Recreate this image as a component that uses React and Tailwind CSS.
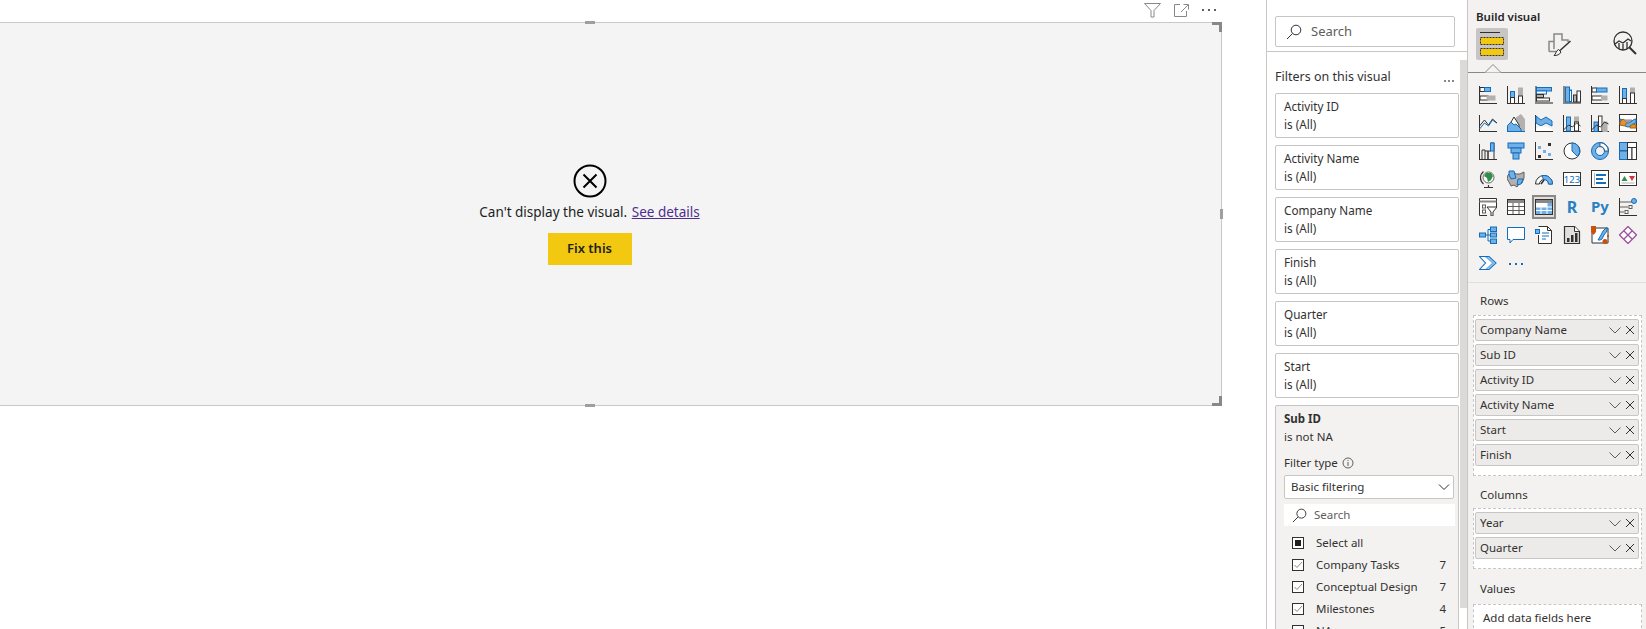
import React from "react";

const D = "#323130";
const B = "#106ebe";
const L = "#71afe5";
const G = "#b3b0ad";
const W = "#ffffff";

const I = ({ children, size = 18, box = 18 }) => (
  <svg width={size} height={size} viewBox={`0 0 ${box} ${box}`} fill="none" strokeWidth="1">
    {children}
  </svg>
);
const R = ({ x, y, w, h, f = W, s = D, sw = 1 }) => (
  <rect x={x} y={y} width={w} height={h} fill={f} stroke={s} strokeWidth={sw} />
);
const P = ({ d, f = "none", s = D, sw = 1 }) => <path d={d} fill={f} stroke={s} strokeWidth={sw} />;

const icons = [
  <>
    <P d="M.5 0v17.5M0 17.5h18" />
    <R x="1" y="1.5" w="4.5" h="4" />
    <R x="5.5" y="1.5" w="6" h="4" f={L} s={B} />
    <R x="1" y="10" w="8" h="4" />
    <R x="8" y="10" w="8" h="4" f={G} s={G} />
  </>,
  <>
    <P d="M.5 0v17.5M0 17.5h18" />
    <R x="3.5" y="5.5" w="4" h="6" f={L} s={B} />
    <R x="3.5" y="11.5" w="4" h="6" />
    <R x="11.5" y="2" w="4" h="8" f={G} s={G} />
    <R x="11.5" y="10" w="4" h="7.5" />
  </>,
  <>
    <P d="M1 0v18M0 17h18" s="#8a8886" sw="2" />
    <R x="1.5" y="1.5" w="15" h="3.5" f={L} s={B} />
    <R x="1.5" y="5" w="10" h="3" f={W} s={B} />
    <R x="1.5" y="8.5" w="7" h="3" f={G} s={D} />
    <R x="1.5" y="12" w="13" h="3" f={W} s={D} />
  </>,
  <>
    <P d="M1 0v18M0 17h18" s="#8a8886" sw="2" />
    <R x="2.5" y="1" w="4" h="15" f={L} s={B} />
    <R x="6.5" y="4" w="2" h="12" f={W} s={B} />
    <R x="10.5" y="9" w="3" h="7" f={G} s={D} />
    <R x="14" y="5" w="3.5" h="11" f={W} s={D} />
  </>,
  <>
    <P d="M.5 0v17.5M0 17.5h18" />
    <R x="1" y="2" w="4.5" h="4" />
    <R x="5.5" y="2" w="10.5" h="4" f={L} s={B} />
    <R x="1" y="10" w="9.5" h="4" />
    <R x="10.5" y="10" w="5.5" h="4" f={G} s={G} />
  </>,
  <>
    <P d="M.5 0v17.5M0 17.5h18" />
    <R x="3.5" y="2.5" w="4" h="10" f={L} s={B} />
    <R x="3.5" y="12.5" w="4" h="5" />
    <R x="11.5" y="2" w="4" h="5" f={G} s={G} />
    <R x="11.5" y="7" w="4" h="10.5" />
  </>,
  <>
    <P d="M.5 1v16.5M0 17.5h18" />
    <P d="M.5 12l5-6 4 5 4-6 4.5 4" />
    <P d="M.5 15l5-6 4 3 4-6 4 3" s={B} />
  </>,
  <>
    <P d="M9 4L14 0.5 18 6v12H9z" f={G} s={G} />
    <P d="M0 15L7 3l5 8v6.5H0z" f={W} s={D} />
    <P d="M.5 11.5L4 8l3 3 2-1 5 5v2.5H.5z" f={L} s={B} />
    <P d="M0 17.5h18" s={B} />
  </>,
  <>
    <P d="M.5 1v16.5M0 17.5h18" />
    <P d="M1 2l5 4 5-3 6 4v5l-6-3-5 3-5-3z" f={L} s={B} />
    <P d="M1 15l5-3 5 1 6 2v2H1z" f={W} s="none" />
  </>,
  <>
    <P d="M.5 1v16.5M0 17.5h18" />
    <R x="3.5" y="3" w="4" h="14" f={L} s={B} />
    <R x="11.5" y="3" w="4" h="5" f={G} s={G} />
    <R x="11.5" y="8" w="4" h="9" />
    <P d="M.5 16l5-5 4 2 4-4 4 3" />
  </>,
  <>
    <P d="M.5 1v16.5M0 17.5h18" />
    <R x="3" y="8" w="4" h="9.5" f={L} s={B} />
    <R x="7.5" y="2" w="3.5" h="15.5" />
    <R x="12" y="8" w="4" h="9.5" f={G} s={G} />
    <P d="M.5 16l5-5 4 2 4-5 4 2" />
  </>,
  <>
    <R x=".5" y=".5" w="17" h="17" f={W} s={D} />
    <P d="M1 5c4 0 4 4 8 4s4-4 8-4v4c-4 0-4 4-8 4s-4-4-8-4z" f={L} s={B} />
    <P d="M1 8l3-3 4 3-2 4-5-1z" f="#e8912a" s="#a4620f" />
    <P d="M11 12l3-2 3 1v3h-6z" f="#e8912a" s="#a4620f" />
    <P d="M5 6h8l-2 2H7z" f={G} s="#8a8886" />
  </>,
  <>
    <P d="M.5 2v15.5M0 17.5h18" />
    <P d="M3 17V8h3v9M6 9h3v8M9 17V9h3V1h3v16" s={D} />
    <R x="11.5" y="1" w="3.5" h="8" f={L} s={B} />
  </>,
  <>
    <R x="1" y="1" w="16" h="5" f={L} s={B} />
    <R x="4" y="6" w="10" h="5" f={L} s={B} />
    <R x="6" y="11" w="6" h="6" f={L} s={B} />
  </>,
  <>
    <P d="M.5 0v17.5M0 17.5h18" />
    <rect x="3" y="4" width="3" height="3" fill={L} />
    <rect x="8" y="8" width="3" height="3" fill={L} />
    <rect x="13" y="11" width="3" height="3" fill={L} />
    <rect x="3" y="13" width="3" height="3" fill={D} />
    <rect x="13" y="1" width="3" height="3" fill={D} />
  </>,
  <>
    <circle cx="9" cy="9" r="8" fill={W} stroke={D} />
    <P d="M9 1a8 8 0 0 1 5.5 13.5L9 9z" f={L} s={B} />
  </>,
  <>
    <circle cx="9" cy="9" r="6.5" stroke={L} strokeWidth="4" />
    <P d="M9 .5a8.5 8.5 0 0 1 8.5 8.5H13.500A4.500 4.500 0 0 0 9 4.500z" f={W} s={D} sw=".8" />
    <circle cx="9" cy="9" r="8.500" stroke={B} />
    <circle cx="9" cy="9" r="4.500" stroke={B} />
  </>,
  <>
    <R x=".5" y=".5" w="8" h="8" f={L} s={B} />
    <R x=".5" y="9" w="8" h="8.500" f={L} s={B} />
    <R x="8.500" y=".5" w="9" h="5" f={W} s={D} />
    <R x="8.500" y="5.500" w="4.500" h="12" f={W} s={D} />
    <R x="13" y="5.500" w="4.500" h="12" f={W} s={D} />
  </>,
  <>
    <circle cx="9.500" cy="7.500" r="5.500" fill={W} stroke="#605e5c" />
    <path d="M7 3h5l2 3-2 4-3 2-1-4-3-2z" fill="#2f8f46" />
    <P d="M4.500 1.500a8 8 0 0 0 0 12.500M5 17.500h9M9.500 15v2.500" s={D} sw="1.200" />
  </>,
  <>
    <P d="M1 5l4-4 4 3h4l4-2v6l-2 5-3 1-2 3-3-2-3 1-2-4-2-3z" f={G} s="#605e5c" />
    <P d="M2 1h5l1 4 1 3-5 1-2-4z" f={L} s={B} />
    <P d="M11 9h5l-2 5-4 1z" f={L} s={B} />
  </>,
  <>
    <P d="M.5 14a8.500 8.500 0 0 1 17 0h-4a4.500 4.500 0 0 0-9 0z" f={W} s={D} />
    <P d="M7 5.700a8.500 8.500 0 0 1 10.500 8.300h-4a4.500 4.500 0 0 0-5-4.500z" f={L} s={B} />
    <P d="M6 14l3-4" sw="1.500" />
  </>,
  <>
    <R x=".5" y="2.500" w="17" h="13" f={W} s={D} />
    <text x="9" y="13" textAnchor="middle" fontSize="9.500" fill={B} fontFamily="'Noto Sans',sans-serif">123</text>
  </>,
  <>
    <R x=".5" y=".5" w="17" h="17" f={W} s={D} />
    <P d="M3.500 3v12" s={G} />
    <rect x="5" y="4" width="10" height="2" fill={B} />
    <rect x="5" y="8" width="7" height="2" fill={B} />
    <rect x="5" y="12" width="10" height="2" fill={B} />
  </>,
  <>
    <R x=".5" y="2.500" w="17" h="13" f={W} s={D} />
    <path d="M2.500 11L5.500 6l3 5z" fill="#2f8f46" />
    <path d="M10 6h6l-3 5z" fill="#d13438" />
    <path d="M2.500 13h13" stroke={G} />
  </>,
  <>
    <P d="M.5 17.500V.5h17v9" f={W} />
    <P d="M.5 3.500h17" f="none" sw="2" s="#8a8886" />
    <R x="3.500" y="7" w="3" h="3" f={W} s="#605e5c" />
    <R x="3.500" y="12" w="3" h="3" f={W} s="#605e5c" />
    <P d="M.5 17.500H8" />
    <P d="M8 9h10l-4 5v4h-2v-4z" f={W} s={D} />
  </>,
  <>
    <R x=".5" y="1.500" w="17" h="15" f={W} s={D} />
    <rect x="1" y="2" width="16" height="3" fill="#8a8886" />
    <P d="M6 5v11M12 5v11M1 8.500h16M1 12.500h16" s="#605e5c" />
  </>,
  <>
    <rect x=".5" y="1.500" width="17" height="15" fill={W} stroke={D} />
    <rect x="1" y="2" width="16" height="3" fill="#8a8886" />
    <rect x="12" y="5" width="5" height="11" fill={L} />
    <rect x="1" y="9" width="16" height="7" fill={L} />
    <P d="M6 5v11M12 5v11M1 9h16M1 12.500h16" s={W} />
    <rect x=".5" y="1.500" width="17" height="15" stroke={D} />
  </>,
  <text x="9" y="15" textAnchor="middle" fontSize="16" fontWeight="700" fill="#2a80c4" fontFamily="'Noto Sans',sans-serif">R</text>,
  <svg width="24" height="18" viewBox="0 0 24 18" x="-3" y="0">
    <text x="12" y="14" textAnchor="middle" fontSize="15" fontWeight="700" fill="#2a80c4" fontFamily="'Noto Sans',sans-serif">Py</text>
  </svg>,
  <>
    <P d="M.5 0v17.500M0 17.500h18" />
    <P d="M1 4h12M1 9h8M1 14h4" s="#605e5c" />
    <circle cx="15" cy="3" r="2.500" fill={L} stroke={B} />
    <rect x="10" y="7.500" width="3" height="3" fill={W} stroke="#605e5c" />
    <rect x="6" y="12.500" width="3" height="3" fill={W} stroke="#605e5c" />
  </>,
  <>
    <R x=".5" y="7" w="6" h="4" f={L} s={B} />
    <P d="M7 9h4M9 3.500v11.500M9 3.500h3M9 15h3" s={B} />
    <R x="11.500" y="1" w="6" h="4.500" f={L} s={B} />
    <R x="11.500" y="7" w="6" h="4" f={L} s={B} />
    <R x="11.500" y="13" w="6" h="4.500" f={L} s={B} />
  </>,
  <P d="M.5 1.500h17v12H6l-3 3.500v-3.500H.5z" f={W} s={B} />,
  <>
    <P d="M3.500 .5h9l4 4v13h-13V9" f={W} />
    <P d="M12.500 .5v4h4" />
    <R x=".5" y="3.500" w="4" h="4" f={L} s={B} />
    <P d="M7 7h7M7 10h7M7 13h4" s={B} />
  </>,
  <>
    <P d="M1.500 .5h10l5 5v12h-15z" f="#e1dfdd" s={D} sw="1.200" />
    <P d="M11.500 .5v5h5" f={W} />
    <rect x="4" y="12" width="2.500" height="4" fill={D} />
    <rect x="8" y="9" width="2.500" height="7" fill={D} />
    <rect x="12" y="7" width="2.500" height="9" fill={D} />
  </>,
  <>
    <P d="M1 2h16v15H1z" f={W} s={D} />
    <P d="M7 14l3-5 2-4 3-3h1v3l-3 4-2 4-2 1z" f={L} s={B} />
    <path d="M0 0h5v6L2.500 9 0 6z" fill="#ca5010" />
    <circle cx="14" cy="15.500" r="2.500" fill="#ca5010" />
    <rect x="16" y="9" width="2" height="2" fill="#ca5010" />
  </>,
  <>
    <P d="M9 .5L17.500 9 9 17.500.5 9z" f={W} s="#9c4f9c" sw="1.300" />
    <P d="M5 5l8 8M13 5l-8 8" s="#9c4f9c" sw="1.300" />
  </>,
  <>
    <P d="M.5 2.500h9.500L17 9l-7 6.500H.5L6.500 9z" f={W} s={B} sw="1.100" />
    <path d="M6 3l7 6-6.500 6h2.500L15.500 9 9 3z" fill={L} />
  </>,
  <>
    <rect x="2" y="9" width="2" height="2" fill={B} />
    <rect x="8" y="9" width="2" height="2" fill={B} />
    <rect x="14" y="9" width="2" height="2" fill={B} />
  </>,
];

const Search = ({ size = 16 }) => (
  <svg width={size} height={size} viewBox="0 0 16 16" fill="none" stroke="#323130" strokeWidth="1">
    <circle cx="10" cy="6" r="4.800" />
    <path d="M6.500 9.500L1 15" />
  </svg>
);

const FilterCard = ({ name }) => (
  <div className="h-[45px] shrink-0 rounded-[2px] border border-[#c8c6c4] bg-white px-2 pt-[3px] text-[11.7px] leading-[18px] text-[#323130]">
    <div>{name}</div>
    <div>is (All)</div>
  </div>
);

const Check = ({ label, count, state }) => (
  <div className="flex h-[22px] shrink-0 items-center pl-2 pr-[4px] text-[11.5px] text-[#323130]">
    <span className="flex h-[12px] w-[12px] items-center justify-center border border-[#323130] bg-white">
      {state === "all" && <span className="h-[6px] w-[6px] bg-[#201f1e]" />}
      {state === "on" && (
        <svg width="10" height="10" viewBox="0 0 10 10" fill="none" stroke="#8a8886">
          <path d="M1.500 5l2.500 2.500 5-5.500" />
        </svg>
      )}
    </span>
    <span className="ml-3 flex-1">{label}</span>
    <span>{count}</span>
  </div>
);

const Field = ({ name }) => (
  <div className="flex h-[22px] items-center rounded-[2px] border border-[#c8c6c4] bg-[#edebe9] pl-1 pr-[2px] text-[11.5px] text-[#323130]">
    <span className="flex-1">{name}</span>
    <svg width="12" height="12" viewBox="0 0 12 12" fill="none" stroke="#605e5c" className="mr-1">
      <path d="M.5 3.500L6 9l5.500-5.500" />
    </svg>
    <svg width="10" height="10" viewBox="0 0 10 10" fill="none" stroke="#323130" className="mr-[1px]">
      <path d="M1 1l8 8M9 1l-8 8" />
    </svg>
  </div>
);

const Dropzone = ({ fields }) => (
  <div className="ml-[5px] mr-1 flex flex-col gap-[3px] border border-dashed border-[#c8c6c4] bg-white pl-[1px] pr-[2px] pt-[3px] pb-[9px]">
    {fields.map((f) => (
      <Field key={f} name={f} />
    ))}
  </div>
);

const Corner = ({ cls }) => <div className={cls} />;

export default function App() {
  return (
    <div
      className="flex h-[629px] w-[1646px] overflow-hidden bg-white text-[#323130]"
      style={{ fontFamily: "'Noto Sans', sans-serif" }}
    >
      {/* Report canvas */}
      <div className="flex w-[1266px] shrink-0 flex-col">
        <div className="flex h-[22px] w-[1222px] items-center justify-end pr-[5px] pb-[2px]">
          <svg width="17" height="15" viewBox="0 0 17 15" fill="none" stroke="#8a8886" className="mr-[13px]">
            <path d="M.5.5h16L10 7.500v6.500H7V7.500z" />
          </svg>
          <svg width="15" height="13" viewBox="0 0 15 13" fill="none" stroke="#8a8886" className="mr-[12px]">
            <path d="M6 .5H.5v12h12V7M7 8l7-7M9.500.5H14.500V5.500" />
          </svg>
          <svg width="16" height="4" viewBox="0 0 16 4" fill="#605e5c">
            <rect x="1" y="1" width="2" height="2" />
            <rect x="7" y="1" width="2" height="2" />
            <rect x="13" y="1" width="2" height="2" />
          </svg>
        </div>
        <div className="relative flex h-[384px] w-[1222px] flex-col items-center justify-center border-y border-r border-[#c8c8c8] bg-[#f4f4f4] pr-[42px]">
          <svg width="34" height="34" viewBox="0 0 34 34" fill="none" stroke="#000000" strokeWidth="2">
            <circle cx="17" cy="17" r="15.500" />
            <path d="M10.500 10.500l13 13M23.500 10.500l-13 13" />
          </svg>
          <div className="mt-[4px] text-[13.500px] leading-[20px] text-[#201f1e]">
            Can't display the visual.{" "}
            <span className="ml-[1px] text-[#4f2d8f] underline">See details</span>
          </div>
          <div className="mt-[11px] flex h-[32px] w-[84px] items-center justify-center bg-[#f2c811] text-[13px] font-semibold text-[#201f1e]">
            Fix this
          </div>
          <Corner cls="absolute -top-px -right-px h-[10px] w-[10px] border-t-[3px] border-r-[3px] border-[#8a8886]" />
          <Corner cls="absolute -bottom-px -right-px h-[10px] w-[10px] border-b-[3px] border-r-[3px] border-[#8a8886]" />
          <Corner cls="absolute -top-[2px] left-[585px] h-[3px] w-[10px] bg-[#a19f9d]" />
          <Corner cls="absolute -bottom-[2px] left-[585px] h-[3px] w-[10px] bg-[#a19f9d]" />
          <Corner cls="absolute top-[186px] -right-[2px] h-[10px] w-[3px] bg-[#a19f9d]" />
        </div>
      </div>

      {/* Filter pane */}
      <div className="flex w-[202px] shrink-0 flex-col border-x border-[#c8c6c4]">
        <div className="h-[52px] shrink-0 border-b border-[#c8c6c4] px-2 pt-4">
          <div className="flex h-[31px] w-[180px] items-center rounded-[2px] border border-[#c8c6c4] pl-[10px] text-[13px] text-[#605e5c]">
            <Search />
            <span className="ml-[9px]">Search</span>
          </div>
        </div>
        <div className="flex min-h-0 flex-1">
          <div className="flex w-[192px] shrink-0 flex-col pl-2">
            <div className="flex h-[41px] shrink-0 items-end justify-between pr-[2px] pb-[7px] text-[12.500px] leading-[18px]">
              <span>Filters on this visual</span>
              <svg width="12" height="3" viewBox="0 0 12 3" fill="#8a8886" className="mb-1 mr-[1px]">
                <rect x="0" y="1" width="2" height="2" />
                <rect x="4" y="1" width="2" height="2" />
                <rect x="8" y="1" width="2" height="2" />
              </svg>
            </div>
            <div className="flex w-[184px] flex-col gap-[7px]">
              {["Activity ID", "Activity Name", "Company Name", "Finish", "Quarter", "Start"].map((n) => (
                <FilterCard key={n} name={n} />
              ))}
              <div className="h-[260px] shrink-0 rounded-[2px] border border-[#c8c6c4] bg-[#f3f2f1] px-2 pt-[4px] text-[11.500px] leading-[18px]">
                <div className="font-bold">Sub ID</div>
                <div>is not NA</div>
                <div className="mt-2 flex h-[18px] items-center gap-1">
                  <span>Filter type</span>
                  <svg width="12" height="12" viewBox="0 0 12 12" fill="none" stroke="#605e5c">
                    <circle cx="6" cy="6" r="5" />
                    <path d="M6 5v4M6 3v1" />
                  </svg>
                </div>
                <div className="mt-[3px] flex h-[24px] w-[170px] items-center rounded-[2px] border border-[#c8c6c4] bg-white pl-[6px] pr-[3px]">
                  <span className="flex-1">Basic filtering</span>
                  <svg width="12" height="12" viewBox="0 0 12 12" fill="none" stroke="#323130">
                    <path d="M1 3.500L6 8.500l5-5" />
                  </svg>
                </div>
                <div className="mt-[5px] flex h-[22px] w-[171px] items-center bg-white pl-2 text-[#605e5c]">
                  <Search size={15} />
                  <span className="ml-[7px]">Search</span>
                </div>
                <div className="mt-[6px] flex flex-col">
                  <Check label="Select all" state="all" />
                  <Check label="Company Tasks" count="7" state="on" />
                  <Check label="Conceptual Design" count="7" state="on" />
                  <Check label="Milestones" count="4" state="on" />
                  <Check label="NA" count="5" />
                </div>
              </div>
            </div>
          </div>
          <div className="ml-[1px] mt-2 h-[548px] w-[7px] shrink-0 bg-[#dbdad9]" />
        </div>
      </div>

      {/* Visualizations pane */}
      <div className="flex min-w-0 flex-1 flex-col bg-[#f3f2f1]">
        <div className="h-[28px] shrink-0 pl-2 pt-[8px] text-[11.500px] font-semibold leading-[18px] text-[#252423]">
          Build visual
        </div>
        <div className="relative flex h-[45px] shrink-0 items-start border-b border-[#8a8886] pl-2">
          <div className="flex h-[32px] w-[32px] items-center justify-center rounded-[2px] bg-[#c8c6c4]">
            <svg width="24" height="24" viewBox="0 0 24 24" fill="none">
              <path d="M0 .5h20" stroke="#323130" />
              <rect x=".5" y="5.500" width="23" height="7" fill="#f2c811" stroke="#323130" strokeDasharray="2 1" />
              <rect x=".5" y="16.500" width="23" height="7" fill="#f2c811" stroke="#323130" strokeDasharray="2 1" />
            </svg>
          </div>
          <svg width="24" height="24" viewBox="0 0 24 24" fill="none" className="ml-[40px] mt-[5px]">
            <path d="M1 18.500V8.500h5V1h8v6h6v2M1 18.500h7M6 8.500V16" stroke="#8a8886" strokeWidth="1.500" />
            <path d="M22.500 8L12 17.500" stroke="#323130" strokeWidth="1.500" />
            <path d="M10.500 16.500l2.500 2.500c-1.500 3-4 3.500-7 3.500 2-1.500 2-5 4.500-6z" fill="#f3f2f1" stroke="#323130" />
          </svg>
          <svg width="24" height="26" viewBox="0 0 24 26" fill="none" stroke="#323130" strokeWidth="1.300" className="ml-[41px] mt-[3px]">
            <circle cx="10" cy="10" r="9" />
            <path d="M16 16l7 7" strokeWidth="2" />
            <path d="M2 13l4-3 4 2 5-4 3 2M6 12v6M10 13v6M14 11v7" />
          </svg>
          <svg width="18" height="9" viewBox="0 0 18 9" className="absolute bottom-[-1px] left-[16px]">
            <path d="M0 8.500h1L9 .5l8 8h1" fill="#f3f2f1" stroke="#8a8886" />
          </svg>
        </div>

        <div className="grid h-[210px] shrink-0 grid-cols-[repeat(6,28px)] auto-rows-[28px] justify-start border-b border-[#e1dfdd] pl-[6px] pt-[8px]">
          {icons.map((ic, i) => (
            <div key={i} className="flex items-center justify-center">
              {i === 26 ? (
                <div className="flex h-[24px] w-[24px] items-center justify-center border-2 border-[#8a8886] bg-[#e1dfdd]">
                  <I>{ic}</I>
                </div>
              ) : (
                <I>{ic}</I>
              )}
            </div>
          ))}
        </div>

        <div className="flex h-[32px] shrink-0 items-center pl-3 pt-[4px] text-[11.500px]">Rows</div>
        <Dropzone fields={["Company Name", "Sub ID", "Activity ID", "Activity Name", "Start", "Finish"]} />
        <div className="flex h-[32px] shrink-0 items-center pl-3 pt-[6px] text-[11.500px]">Columns</div>
        <Dropzone fields={["Year", "Quarter"]} />
        <div className="flex h-[35px] shrink-0 items-center pl-3 pt-[4px] text-[11.500px]">Values</div>
        <div className="ml-[5px] mr-1 h-[40px] shrink-0 border border-dashed border-[#c8c6c4] bg-white pl-[9px] pt-[4px] text-[11.500px] leading-[18px]">
          Add data fields here
        </div>
      </div>
    </div>
  );
}
